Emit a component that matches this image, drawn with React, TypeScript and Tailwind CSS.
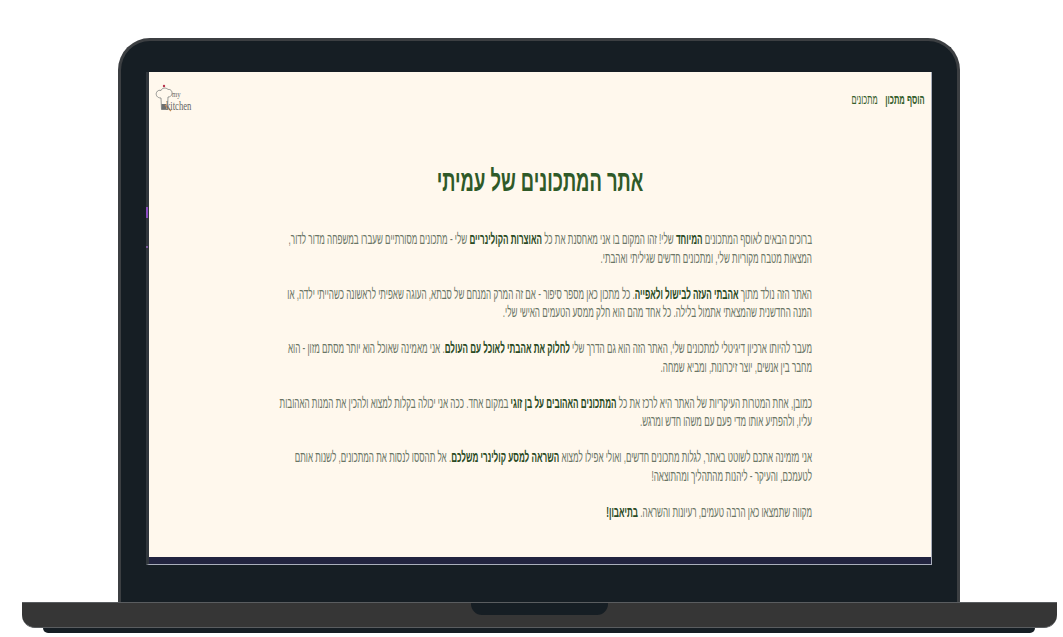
import React from "react"

const font = "font-['Liberation_Sans',sans-serif]"

function Logo() {
  return (
    <div className="relative h-[28px] w-[38px]">
      <svg width="24" height="28" viewBox="0 0 24 28" fill="none" className="absolute left-0 top-0">
        <circle cx="9" cy="2" r="1.2" fill="#b8324a" />
        <path d="M6 14C2 14 0.5 11 1.5 8.5C2.5 6 5 6 6 6.5C7 3.5 11.5 3.5 13 5.5C15.5 5 17.5 7 17 10C16.5 12 15 13 13 13" stroke="#6a6e6f" strokeWidth="0.7" />
        <path d="M6 14L6.5 25.5H12.5L13 13" stroke="#6a6e6f" strokeWidth="0.7" />
        <rect x="6.5" y="20" width="5" height="5.5" fill="#6c6f70" />
        <path d="M10 21L16 27" stroke="#c28a52" strokeWidth="1.1" />
      </svg>
      <span className="absolute left-[17px] top-[6px] origin-left scale-x-75 font-['Liberation_Serif',serif] text-[9px] leading-none text-[#666]">my</span>
      <span className="absolute left-[11px] top-[16px] origin-left scale-x-[0.72] font-['Liberation_Serif',serif] text-[12px] leading-none text-[#666]">kitchen</span>
    </div>
  )
}

function Para({ children }: { children: React.ReactNode }) {
  return <p className="whitespace-nowrap text-[15px] leading-[18.5px] text-[#6a7565]">{children}</p>
}

function B({ children }: { children: React.ReactNode }) {
  return <strong className="font-bold text-[#2a4a24]">{children}</strong>
}

export default function App() {
  return (
    <div className={`relative flex h-[637px] w-[1063px] flex-col overflow-hidden bg-white ${font}`}>
      {/* lid */}
      <div className="ml-[118px] mt-[38px] flex h-[564px] w-[842px] flex-col rounded-t-[32px] border-[3px] border-b-0 border-[#3c3f42] bg-[#161e24] px-[25px] pt-[31px]">
        <div className="relative flex h-[493px] w-[786px] flex-col border-b border-l-[3px] border-r border-[#a9aebb] border-l-[#30363c] bg-[#22243f]">
          <div className="absolute -left-[3px] top-[135px] h-[11px] w-[2px] bg-[#8a4cc0]" />
          <div className="absolute -left-[3px] top-[174px] h-[2px] w-[2px] bg-[#7a5a9a]" />
          {/* page */}
          <div className="relative h-[485px] w-full overflow-hidden bg-[#fff8ed]" dir="rtl">
            <div className="flex items-start justify-between pl-[6px] pr-[6px] pt-[12px]">
              <div className="flex h-[30px] origin-right scale-x-[0.54] items-center gap-[14px] text-[14px] text-[#36602c]">
                <span className="whitespace-nowrap font-bold">הוסף מתכון</span>
                <span className="whitespace-nowrap">מתכונים</span>
              </div>
              <div dir="ltr"><Logo /></div>
            </div>
            <h1 className="mt-[49px] scale-x-[0.634] whitespace-nowrap text-center text-[29px] font-bold leading-[36px] text-[#2f5a28]">
              אתר המתכונים של עמיתי
            </h1>
            <div className="mr-[119px] mt-[31px] flex origin-right scale-x-[0.54] flex-col gap-[17.5px]">
              <Para>
                ברוכים הבאים לאוסף המתכונים <B>המיוחד</B> שלי! זהו המקום בו אני מאחסנת את כל <B>האוצרות הקולינריים</B> שלי - מתכונים מסורתיים שעברו במשפחה מדור לדור,
                <br />
                המצאות מטבח מקוריות שלי, ומתכונים חדשים שגיליתי ואהבתי.
              </Para>
              <Para>
                האתר הזה נולד מתוך <B>אהבתי העזה לבישול ולאפייה</B>. כל מתכון כאן מספר סיפור - אם זה המרק המנחם של סבתא, העוגה שאפיתי לראשונה כשהייתי ילדה, או
                <br />
                המנה החדשנית שהמצאתי אתמול בלילה. כל אחד מהם הוא חלק ממסע הטעמים האישי שלי.
              </Para>
              <Para>
                מעבר להיותו ארכיון דיגיטלי למתכונים שלי, האתר הזה הוא גם הדרך שלי <B>לחלוק את אהבתי לאוכל עם העולם</B>. אני מאמינה שאוכל הוא יותר מסתם מזון - הוא
                <br />
                מחבר בין אנשים, יוצר זיכרונות, ומביא שמחה.
              </Para>
              <Para>
                כמובן, אחת המטרות העיקריות של האתר היא לרכז את כל <B>המתכונים האהובים על בן זוגי</B> במקום אחד. ככה אני יכולה בקלות למצוא ולהכין את המנות האהובות
                <br />
                עליו, ולהפתיע אותו מדי פעם עם משהו חדש ומרגש.
              </Para>
              <Para>
                אני מזמינה אתכם לשוטט באתר, לגלות מתכונים חדשים, ואולי אפילו למצוא <B>השראה למסע קולינרי משלכם</B>. אל תהססו לנסות את המתכונים, לשנות אותם
                <br />
                לטעמכם, והעיקר - ליהנות מהתהליך ומהתוצאה!
              </Para>
              <Para>
                מקווה שתמצאו כאן הרבה טעמים, רעיונות והשראה. <B>בתיאבון!</B>
              </Para>
            </div>
          </div>
        </div>
      </div>
      {/* base */}
      <div className="ml-[22px] flex h-[26px] w-[1035px] justify-center rounded-b-[13px] border-y border-[#5a5d60] bg-[#363636]">
        <div className="h-[12px] w-[137px] rounded-b-[11px] bg-[#161e24]" />
      </div>
      <div className="ml-[43px] h-[5px] w-[992px] rounded-b-[6px] bg-[#161e24]" />
    </div>
  )
}
